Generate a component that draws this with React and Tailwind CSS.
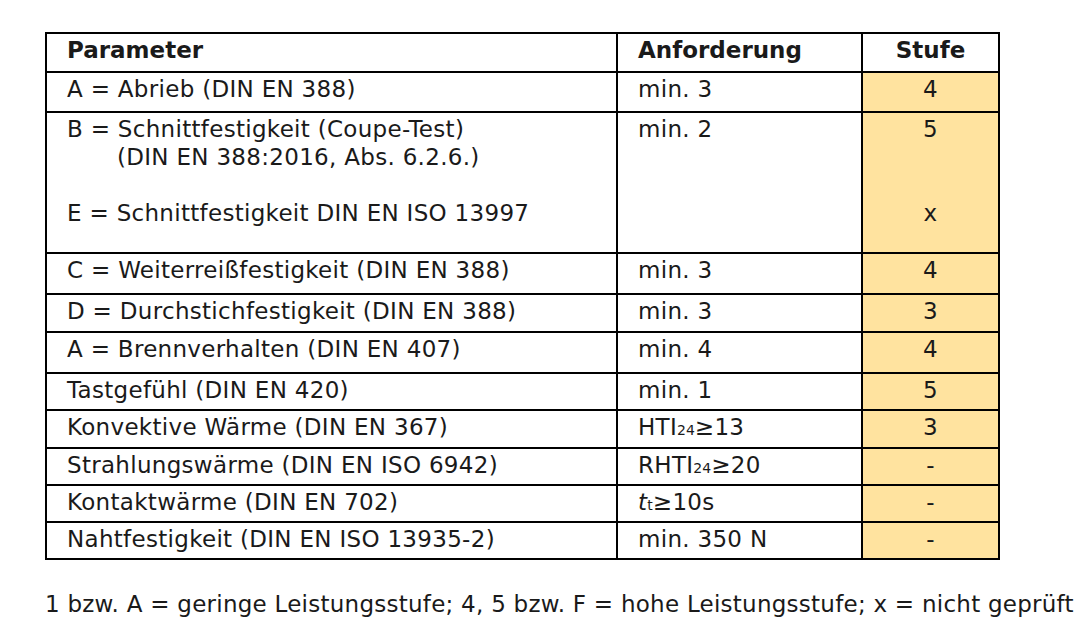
import React from 'react';

const ROWS = [
  { h: 'h-[40px]', param: ['A = Abrieb (DIN EN 388)'], req: 'min. 3', level: ['4'] },
  {
    h: 'h-[141px]',
    param: ['B = Schnittfestigkeit (Coupe-Test)', '(DIN EN 388:2016, Abs. 6.2.6.)', '\u00a0', 'E = Schnittfestigkeit DIN EN ISO 13997'],
    indent: 1,
    req: 'min. 2',
    level: ['5', '\u00a0', '\u00a0', 'x'],
  },
  { h: 'h-[41px]', param: ['C = Weiterreißfestigkeit (DIN EN 388)'], req: 'min. 3', level: ['4'] },
  { h: 'h-[38px]', param: ['D = Durchstichfestigkeit (DIN EN 388)'], req: 'min. 3', level: ['3'] },
  { h: 'h-[41px]', param: ['A = Brennverhalten (DIN EN 407)'], req: 'min. 4', level: ['4'] },
  { h: 'h-[37px]', param: ['Tastgefühl (DIN EN 420)'], req: 'min. 1', level: ['5'] },
  {
    h: 'h-[38px]',
    param: ['Konvektive Wärme (DIN EN 367)'],
    req: (
      <>
        HTI<span className="text-[14px] tracking-normal">24</span>≥13
      </>
    ),
    level: ['3'],
  },
  {
    h: 'h-[37px]',
    param: ['Strahlungswärme (DIN EN ISO 6942)'],
    req: (
      <>
        RHTI<span className="text-[14px] tracking-normal">24</span>≥20
      </>
    ),
    level: ['-'],
  },
  {
    h: 'h-[37px]',
    param: ['Kontaktwärme (DIN EN 702)'],
    req: (
      <>
        <i>t</i>
        <span className="text-[14px] tracking-normal">t</span>≥10s
      </>
    ),
    level: ['-'],
  },
  { h: 'h-[37px]', param: ['Nahtfestigkeit (DIN EN ISO 13935-2)'], req: 'min. 350 N', level: ['-'] },
];

export default function App() {
  return (
    <div className="w-[1090px] h-[632px] bg-white text-[#1a1a1a] font-['DejaVu_Sans',Verdana,sans-serif] text-[23px] tracking-[0.3px] leading-[28px] pt-[32px] pl-[45px]">
      <table className="table-fixed border-collapse w-[953px]">
        <colgroup>
          <col className="w-[571px]" />
          <col className="w-[245px]" />
          <col className="w-[137px]" />
        </colgroup>
        <thead>
          <tr className="h-[39px] tracking-normal">
            <th className="border-2 border-black align-top text-left font-bold pl-[20px] pt-[2px]">Parameter</th>
            <th className="border-2 border-black align-top text-left font-bold pl-[20px] pt-[2px]">Anforderung</th>
            <th className="border-2 border-black align-top text-center font-bold pt-[2px]">Stufe</th>
          </tr>
        </thead>
        <tbody>
          {ROWS.map((row, i) => (
            <tr key={i} className={row.h}>
              <td className="border-2 border-black align-top pl-[20px] pt-[2px]">
                {row.param.map((line, j) => (
                  <div key={j} className={row.indent === j ? 'whitespace-pre pl-[50px]' : 'whitespace-pre'}>
                    {line}
                  </div>
                ))}
              </td>
              <td className="border-2 border-black align-top pl-[20px] pt-[2px]">{row.req}</td>
              <td className="border-2 border-black align-top text-center bg-[#ffe39f] pt-[2px]">
                {row.level.map((v, j) => (
                  <div key={j}>{v}</div>
                ))}
              </td>
            </tr>
          ))}
        </tbody>
      </table>
      <p className="mt-[30px] tracking-[0.25px]">
        1 bzw. A = geringe Leistungsstufe; 4, 5 bzw. F = hohe Leistungsstufe; x = nicht geprüft
      </p>
    </div>
  );
}
